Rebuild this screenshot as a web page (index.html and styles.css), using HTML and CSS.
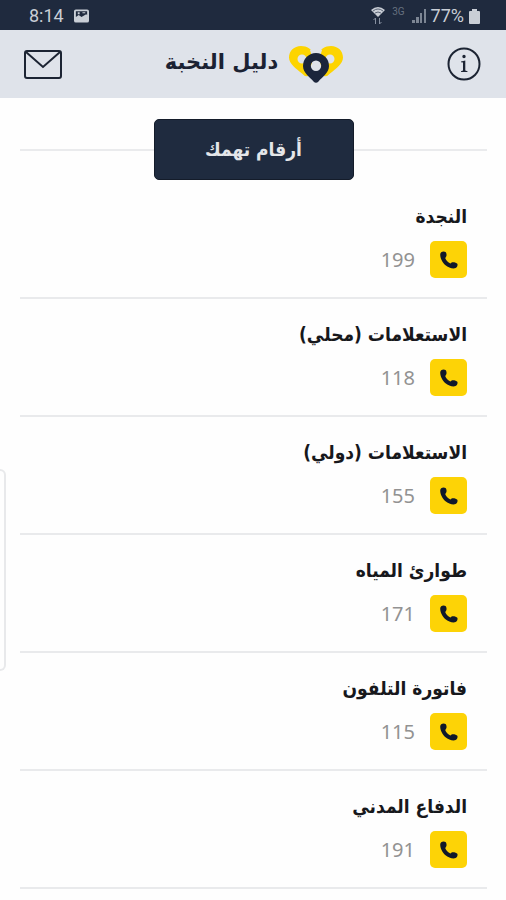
FILE: index.html
```html
<!DOCTYPE html>
<html lang="ar" dir="rtl">
<head>
<meta charset="utf-8">
<meta name="viewport" content="width=device-width, initial-scale=1">
<title>دليل النخبة</title>
<link rel="stylesheet" href="styles.css">
</head>
<body>
<svg class="symbols" aria-hidden="true">
  <symbol id="phone" viewBox="0 0 18 18">
    <path d="M1.200 1.200C2.400.300 4.500.200 5.500 1C6.500 2 6.900 4.200 6.200 5.400C5.900 6.100 5.300 6.500 5.200 7C6 9.200 8 11.500 10.400 12.500C10.900 12.400 11.300 11.600 12.100 11.300C13.500 10.900 16.600 11.500 17.300 12.700C18 14 17.200 16.400 15.600 17.100C12.900 18.200 8.300 16.600 5.500 14.300C2.500 11.600.2 7.200.2 3.400C.2 2.500.6 1.700 1.200 1.200Z"/>
  </symbol>
</svg>
<div class="status" dir="ltr">
  <div class="status-group">
    <span>8:14</span>
    <svg class="picture" viewBox="0 0 16 14"><path fill-rule="evenodd" d="M2 0H14Q16 0 16 2V12Q16 14 14 14H2Q0 14 0 12V2Q0 0 2 0ZM2 2V8L5 6L8 8L13 5L14 6V2Z"/><path d="M4 3H6V5H4ZM9 3H12V4H9Z"/></svg>
  </div>
  <div class="status-group status-right">
    <svg class="wifi" viewBox="0 0 14 18"><path d="M0 3Q7-3 14 3L7 10Z"/><path class="arcs" d="M2 4Q7 0 12 4M4 6Q7 4 10 6"/><path class="arrows" d="M4.500 17V11L2.500 13M8.500 11V17L10.500 15"/></svg>
    <span class="network">3G</span>
    <svg class="signal" viewBox="0 0 14 14"><path d="M0 11H3V14H0ZM4 8H7V14H4ZM8 4H10V14H8ZM12 0H14V14H12Z"/></svg>
    <span>77%</span>
    <svg class="battery" viewBox="0 0 11 15"><path d="M3 0H8V2H10Q11 2 11 3V14Q11 15 10 15H1Q0 15 0 14V3Q0 2 1 2H3Z"/></svg>
  </div>
</div>
<header class="topbar">
  <button class="icon-button" type="button" aria-label="معلومات">
    <svg class="info" viewBox="0 0 34 34"><circle cx="17" cy="17" r="15.500"/><path class="solid" d="M15.300 9.500A1.700 1.700 0 1 0 18.700 9.500A1.700 1.700 0 1 0 15.300 9.500ZM14 14.500L18.300 13.500V23.500L20.500 24.300V25H14V24.300L16 23.500V15.500L14 15.200Z"/></svg>
  </button>
  <div class="brand">
    <svg class="logo" viewBox="0 0 56 38">
      <path class="heart" fill-rule="evenodd" d="M13 1C19 1 24 4 26 10L20 31Q17 32 14 28.500C8 23.500 1 19 1 12.500C1 6 6 1 13 1ZM14 9.500A4.500 4.500 0 1 0 14 18.500A4.500 4.500 0 1 0 14 9.500ZM43 1C37 1 32 4 30 10L36 31Q39 32 42 28.500C48 23.500 55 19 55 12.500C55 6 50 1 43 1ZM42 9.500A4.500 4.500 0 1 0 42 18.500A4.500 4.500 0 1 0 42 9.500Z"/>
      <path class="notch" d="M22 5L28 2L34 5L32 12H24Z"/>
      <path class="pin" fill-rule="evenodd" d="M28 8A13 13 0 0 1 41 21C41 28 34 32 30.500 36.500Q28 39 25.500 36.500C22 32 15 28 15 21A13 13 0 0 1 28 8ZM28 15.500A5.200 5.200 0 1 0 28 25.900A5.200 5.200 0 1 0 28 15.500Z"/>
    </svg>
    <span class="brand-name">دليل النخبة</span>
  </div>
  <button class="icon-button" type="button" aria-label="البريد">
    <svg class="mail" viewBox="0 0 38 29"><rect x="1" y="1" width="36" height="27" rx="2"/><path d="M2 2L19 17L36 2"/></svg>
  </button>
</header>
<main>
  <div class="section"><h1 class="section-title">أرقام تهمك</h1></div>
  <ul class="contacts">
    <li class="contact"><h2 class="name">النجدة</h2><div class="line"><button class="call" type="button" aria-label="اتصال 199"><svg><use href="#phone"/></svg></button><span>199</span></div></li>
    <li class="contact"><h2 class="name">الاستعلامات (محلي)</h2><div class="line"><button class="call" type="button" aria-label="اتصال 118"><svg><use href="#phone"/></svg></button><span>118</span></div></li>
    <li class="contact"><h2 class="name">الاستعلامات (دولي)</h2><div class="line"><button class="call" type="button" aria-label="اتصال 155"><svg><use href="#phone"/></svg></button><span>155</span></div></li>
    <li class="contact"><h2 class="name">طوارئ المياه</h2><div class="line"><button class="call" type="button" aria-label="اتصال 171"><svg><use href="#phone"/></svg></button><span>171</span></div></li>
    <li class="contact"><h2 class="name">فاتورة التلفون</h2><div class="line"><button class="call" type="button" aria-label="اتصال 115"><svg><use href="#phone"/></svg></button><span>115</span></div></li>
    <li class="contact"><h2 class="name">الدفاع المدني</h2><div class="line"><button class="call" type="button" aria-label="اتصال 191"><svg><use href="#phone"/></svg></button><span>191</span></div></li>
  </ul>
</main>
<div class="edge-handle"></div>
</body>
</html>
```
FILE: styles.css
```css
* { box-sizing: border-box; }
body { margin: 0; background: #fefefe; color: #17181c; font-family: "DejaVu Sans Condensed", "DejaVu Sans", sans-serif; }
h1, h2, ul { margin: 0; padding: 0; list-style: none; }
button { padding: 0; border: 0; background: none; cursor: pointer; }
svg { display: block; flex: none; }
.symbols { display: none; }

.status { display: flex; justify-content: space-between; height: 30px; padding: 2px 26px 0 29px; background: #1f2a3e; color: #c9ced6; font: 18px/30px Roboto, sans-serif; }
.status-group { display: flex; align-items: center; gap: 10px; }
.status-right { gap: 5px; }
.status svg { fill: #c9ced6; }
.picture { width: 15px; height: 14px; }
.wifi { width: 14px; height: 18px; }
.wifi .arcs { fill: none; stroke: #5a6475; }
.wifi .arrows { fill: none; stroke: #8790a0; }
.network { align-self: flex-start; color: #66707f; font-size: 10px; line-height: 20px; margin: 0 2px; }
.status .signal { width: 14px; height: 14px; fill: #7c8593; }
.battery { width: 11px; height: 15px; }

.topbar { display: flex; align-items: center; justify-content: space-between; height: 68px; padding: 0 25px 0 24px; background: #dfe3ea; }
.icon-button svg { fill: none; stroke: #1c2433; stroke-width: 2; }
.info { width: 34px; height: 34px; }
.icon-button .solid { fill: #1c2433; stroke: none; }
.mail { width: 38px; height: 29px; }
.brand { display: flex; align-items: center; gap: 10px; }
.logo { width: 56px; height: 38px; }
.heart { fill: #fdd400; }
.notch { fill: #dfe3ea; }
.pin { fill: #1b253b; }
.brand-name { padding-bottom: 4px; color: #1b2233; font-family: "DejaVu Sans", sans-serif; font-size: 21px; font-weight: bold; line-height: 30px; }

.section { display: flex; align-items: center; margin: 21px 19px 1px 20px; }
.section::before, .section::after { content: ""; flex: 1; height: 2px; background: #eaebed; }
.section-title { min-width: 200px; border: 1px solid #141c2a; border-radius: 5px; background: #1f2b3f; color: #e4e6e9; font-size: 19px; line-height: 59px; text-align: center; }

.contacts { margin: 0 19px 0 20px; }
.contact { padding: 20px 20px 19px; border-bottom: 2px solid #e9eaec; }
.name { margin-bottom: 10px; font-size: 19px; line-height: 30px; }
.line { display: flex; align-items: center; gap: 15px; color: #929292; font: 20px/37px "Noto Sans", sans-serif; }
.call { display: grid; place-items: center; width: 37px; height: 37px; border-radius: 5px; background: #fdd306; }
.call svg { width: 18px; height: 18px; fill: #10182a; }

.edge-handle { position: absolute; left: 0; top: 469px; width: 6px; height: 202px; border: 2px solid #e8e9eb; border-left: 0; border-radius: 0 6px 6px 0; }
```
